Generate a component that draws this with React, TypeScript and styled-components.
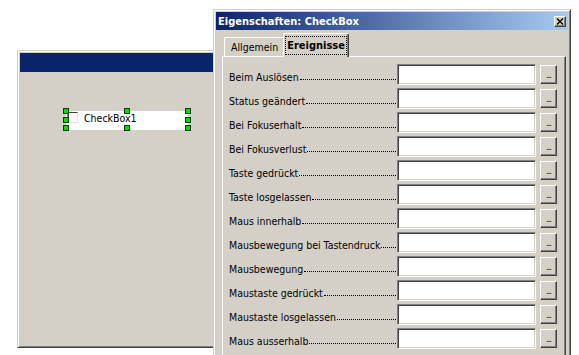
import styled, { createGlobalStyle } from "styled-components"

const GlobalStyle = createGlobalStyle`
  body {
    margin:0;
    background:#fff;
  }
`

const events = [
  "Beim Auslösen",
  "Status geändert",
  "Bei Fokuserhalt",
  "Bei Fokusverlust",
  "Taste gedrückt",
  "Taste losgelassen",
  "Maus innerhalb",
  "Mausbewegung bei Tastendruck",
  "Mausbewegung",
  "Maustaste gedrückt",
  "Maustaste losgelassen",
  "Maus ausserhalb"
]

// selection handles around the control on the form, relative to its box
const CONTROL_W = 122
const CONTROL_H = 19
const handles = [
  [0, 0], [0, 0.5], [0, 1],
  [0.5, 0], [0.5, 1],
  [1, 0], [1, 0.5], [1, 1]
]

export default function App() {
  return (
    <>
      <GlobalStyle />
      <Desktop>

        <FormWindow>
          <FormTitle />
          <FormBody>
            <Control>
              <CheckSquare />
              <ControlLabel>CheckBox1</ControlLabel>
              {handles.map(([fx, fy], i) => (
                <Handle
                  key={i}
                  style={{
                    left: Math.round(fx * CONTROL_W) - 3,
                    top: Math.round(fy * (CONTROL_H - 2)) - 3
                  }}
                />
              ))}
            </Control>
          </FormBody>
        </FormWindow>

        <Dialog>

          <TitleBar>
            <TitleText>Eigenschaften: CheckBox</TitleText>
            <CloseButton>
              <svg width="8" height="7" viewBox="0 0 8 7">
                <path d="M1 0.5 L7 6.5 M7 0.5 L1 6.5" stroke="#000" strokeWidth="1.4" />
              </svg>
            </CloseButton>
          </TitleBar>

          <Tabs>
            <Tab>Allgemein</Tab>
            <Tab $active>
              <TabFocus>Ereignisse</TabFocus>
            </Tab>
          </Tabs>

          <Panel>
            {events.map((name) => (
              <Row key={name}>
                <Label>
                  <LabelText>{name}</LabelText>
                  <Leader />
                </Label>
                <Field />
                <DotsButton>...</DotsButton>
              </Row>
            ))}
          </Panel>

        </Dialog>

      </Desktop>
    </>
  )
}

const Desktop = styled.div`
  position:relative;
  width:579px;
  height:355px;
  overflow:hidden;
  background:#fff;
  font-family:"DejaVu Sans Condensed", "Liberation Sans", sans-serif;
  font-size:10px;
  color:#000;
`

const FormWindow = styled.div`
  position:absolute;
  left:17px;
  top:50px;
  width:220px;
  height:298px;
  box-sizing:border-box;
  padding:2px;

  display:flex;
  flex-direction:column;

  background:#D4D0C8;
  border:1px solid;
  border-color:#D4D0C8 #404040 #404040 #D4D0C8;
  box-shadow:inset 1px 1px #fff, inset -1px -1px #808080;
`

const FormTitle = styled.div`
  height:19px;
  background:#0A246A;
`

const FormBody = styled.div`
  flex:1;
  position:relative;
`

const Control = styled.div`
  position:absolute;
  left:46px;
  top:39px;
  width:${CONTROL_W}px;
  height:${CONTROL_H}px;
  box-sizing:border-box;
  padding:1px 0 0 2px;

  display:flex;
  align-items:flex-start;

  background:#fff;
`

const CheckSquare = styled.div`
  width:10px;
  height:11px;
  box-sizing:border-box;
  border-top:1px solid #404040;
  border-left:1px solid #404040;
  border-right:1px solid #e4e2dc;
  border-bottom:1px solid #e4e2dc;
  box-shadow:-2px -1px 0 -1px #808080;
`

const ControlLabel = styled.span`
  margin-left:6px;
  font-size:10.5px;
  line-height:12px;
`

const Handle = styled.div`
  position:absolute;
  width:6px;
  height:6px;
  box-sizing:border-box;
  background:#00E000;
  border:1px solid #0a3a0a;
`

const Dialog = styled.div`
  position:absolute;
  left:213px;
  top:9px;
  width:358px;
  height:360px;
  box-sizing:border-box;
  padding:2px;

  display:flex;
  flex-direction:column;

  background:#D4D0C8;
  border:1px solid;
  border-color:#D4D0C8 #404040 #404040 #D4D0C8;
  box-shadow:inset 1px 1px #fff, inset -1px -1px #808080;
`

const TitleBar = styled.div`
  height:18px;
  padding:0 2px;

  display:flex;
  align-items:center;
  justify-content:space-between;

  background:linear-gradient(to right, #0A246A, #A6CAF0);
`

const TitleText = styled.span`
  color:#fff;
  font-weight:bold;
  font-size:11px;
`

const CloseButton = styled.div`
  width:12px;
  height:11px;
  box-sizing:border-box;

  display:flex;
  align-items:center;
  justify-content:center;

  background:#D4D0C8;
  border:1px solid;
  border-color:#fff #404040 #404040 #fff;
  box-shadow:inset -1px -1px #808080;
`

const Tabs = styled.div`
  position:relative;
  z-index:1;
  height:24px;
  margin:3px 0 -1px 6px;

  display:flex;
  align-items:flex-end;
`

const Tab = styled.div<{ $active?: boolean }>`
  height:${(p) => (p.$active ? "24px" : "19px")};
  margin:${(p) => (p.$active ? "0 0 0 -2px" : "0 0 1px 2px")};
  padding:${(p) => (p.$active ? "0 2px" : "0 6px")};
  box-sizing:border-box;

  display:flex;
  align-items:center;

  font-size:${(p) => (p.$active ? "11px" : "10.5px")};
  font-weight:${(p) => (p.$active ? "bold" : "normal")};

  background:#D4D0C8;
  border-top:1px solid #fff;
  border-left:1px solid #fff;
  border-right:1px solid #404040;
  border-radius:2px 2px 0 0;
  box-shadow:inset -1px 0 #808080;
`

const TabFocus = styled.span`
  padding:2px 1px;
  outline:1px dotted #000;
`

const Panel = styled.div`
  flex:1;
  margin:0 2px 0 6px;
  padding:7px 6px 0 6px;

  display:flex;
  flex-direction:column;
  gap:3px;

  border-top:1px solid #fff;
  border-left:1px solid #fff;
  border-right:1px solid #404040;
  box-shadow:inset -1px 0 #808080;
`

const Row = styled.div`
  height:21px;
  display:flex;
  align-items:flex-start;
`

const Label = styled.div`
  width:168px;
  height:21px;
  box-sizing:border-box;
  padding-bottom:2px;

  display:flex;
  align-items:flex-end;
`

const LabelText = styled.span`
  line-height:12px;
  font-size:10.5px;
  white-space:nowrap;
`

const Leader = styled.span`
  flex:1;
  height:0;
  margin:0 1px 3px 1px;
  border-bottom:1px dotted #000;
`

const Field = styled.div`
  width:139px;
  height:21px;
  box-sizing:border-box;

  background:#fff;
  border:1px solid;
  border-color:#808080 #fff #fff #808080;
  box-shadow:inset 1px 1px #404040, inset -1px -1px #D4D0C8;
`

const DotsButton = styled.div`
  width:17px;
  height:19px;
  margin:1px 0 0 4px;
  padding-bottom:3px;
  box-sizing:border-box;

  display:flex;
  align-items:flex-end;
  justify-content:center;

  font-size:9px;
  line-height:9px;
  letter-spacing:-1px;

  background:#D4D0C8;
  border:1px solid;
  border-color:#fff #404040 #404040 #fff;
  box-shadow:inset -1px -1px #808080;
`
